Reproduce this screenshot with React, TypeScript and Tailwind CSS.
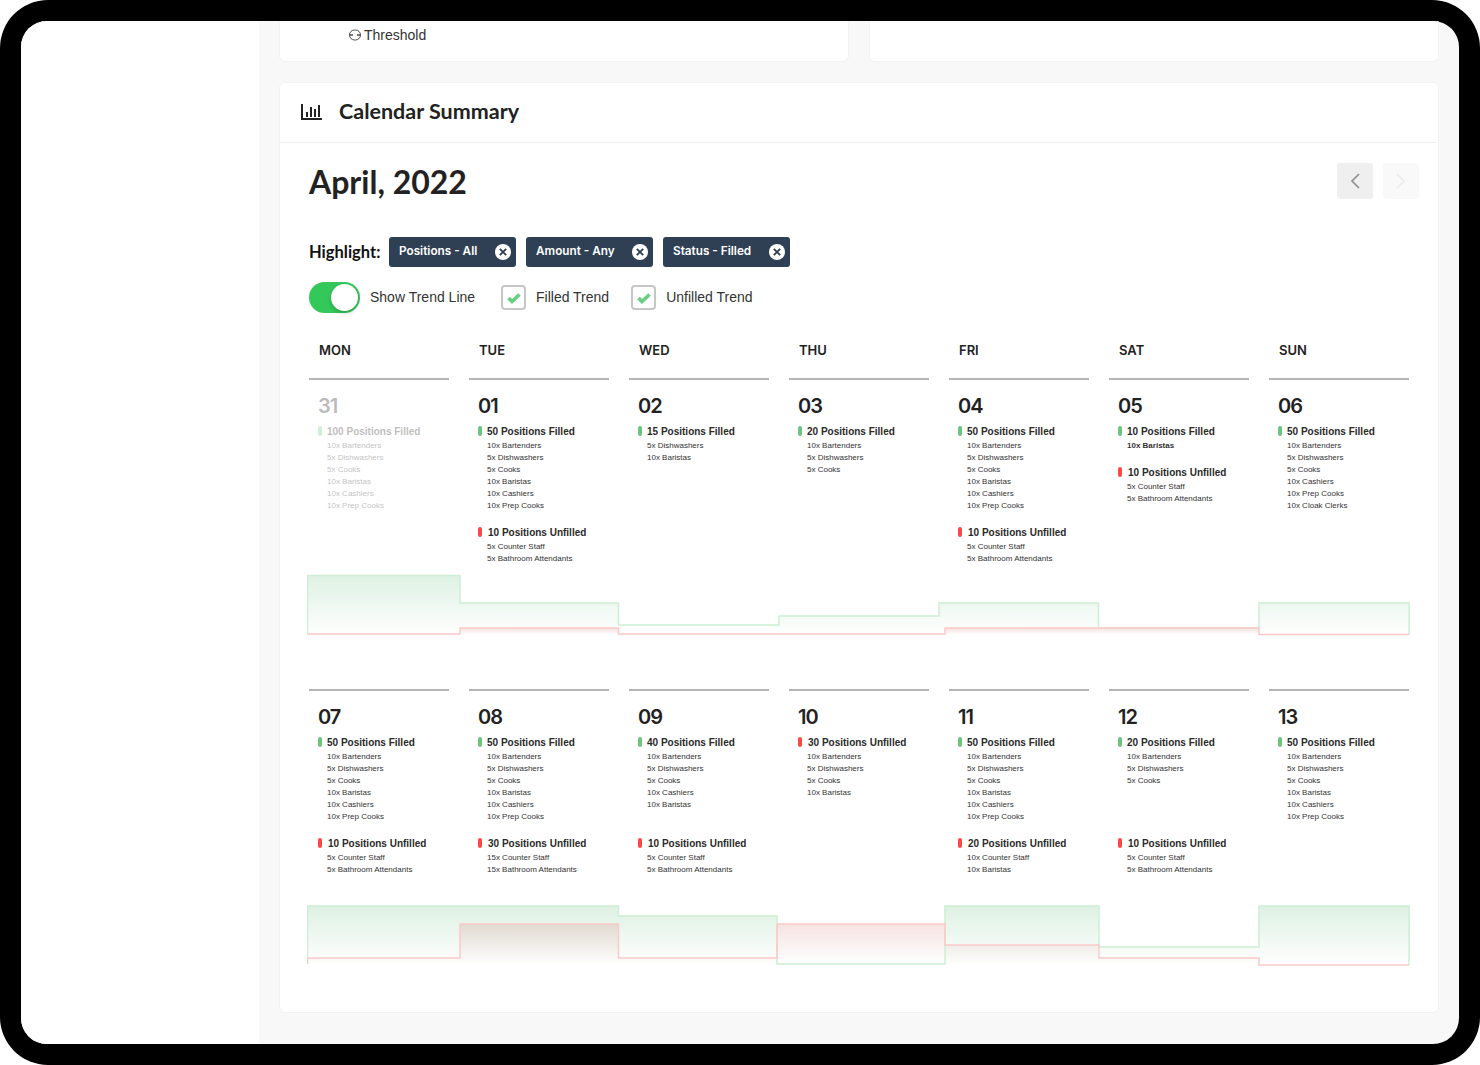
const filledStops = "M307.5 635 V575.5 H460 V603 H618.5 V625 H779 V616 H939 V603 H1098.5 V628 H1259 V603 H1409 V635";

type Section = { kind: "filled" | "unfilled"; title: string; items: string[]; strong?: boolean };
type Day = { num: string; muted?: boolean; sections: Section[] };

const full = ["10x Bartenders", "5x Dishwashers", "5x Cooks", "10x Baristas", "10x Cashiers", "10x Prep Cooks"];
const counterBath = ["5x Counter Staff", "5x Bathroom Attendants"];

const f = (title: string, items: string[], strong?: boolean): Section => ({ kind: "filled", title, items, strong });
const u = (title: string, items: string[]): Section => ({ kind: "unfilled", title, items });

const weekOne: Day[] = [
  { num: "31", muted: true, sections: [f("100 Positions Filled", full)] },
  { num: "01", sections: [f("50 Positions Filled", full), u("10 Positions Unfilled", counterBath)] },
  { num: "02", sections: [f("15 Positions Filled", ["5x Dishwashers", "10x Baristas"])] },
  { num: "03", sections: [f("20 Positions Filled", ["10x Bartenders", "5x Dishwashers", "5x Cooks"])] },
  { num: "04", sections: [f("50 Positions Filled", full), u("10 Positions Unfilled", counterBath)] },
  { num: "05", sections: [f("10 Positions Filled", ["10x Baristas"], true), u("10 Positions Unfilled", counterBath)] },
  {
    num: "06",
    sections: [
      f("50 Positions Filled", ["10x Bartenders", "5x Dishwashers", "5x Cooks", "10x Cashiers", "10x Prep Cooks", "10x Cloak Clerks"]),
    ],
  },
];

// empty strings keep the unfilled block lined up across the second week
const weekTwo: Day[] = [
  { num: "07", sections: [f("50 Positions Filled", full), u("10 Positions Unfilled", counterBath)] },
  { num: "08", sections: [f("50 Positions Filled", full), u("30 Positions Unfilled", ["15x Counter Staff", "15x Bathroom Attendants"])] },
  {
    num: "09",
    sections: [
      f("40 Positions Filled", ["10x Bartenders", "5x Dishwashers", "5x Cooks", "10x Cashiers", "10x Baristas", ""]),
      u("10 Positions Unfilled", counterBath),
    ],
  },
  { num: "10", sections: [u("30 Positions Unfilled", ["10x Bartenders", "5x Dishwashers", "5x Cooks", "10x Baristas"])] },
  { num: "11", sections: [f("50 Positions Filled", full), u("20 Positions Unfilled", ["10x Counter Staff", "10x Baristas"])] },
  {
    num: "12",
    sections: [f("20 Positions Filled", ["10x Bartenders", "5x Dishwashers", "5x Cooks", "", "", ""]), u("10 Positions Unfilled", counterBath)],
  },
  { num: "13", sections: [f("50 Positions Filled", full)] },
];

function DayCell({ day }: { day: Day }) {
  return (
    <div className="border-t-2 border-[#b5b5b5] pl-[9px] pt-[14px]">
      <div className={day.muted ? "opacity-30" : ""}>
        <div className="font-['Inter',sans-serif] text-[20px] font-semibold leading-[24px] tracking-[-1px] text-[#222222]">{day.num}</div>
        <div className="mt-[6px] flex flex-col gap-[13px]">
          {day.sections.map((s) => (
            <div key={s.title}>
              <div className={`flex h-[14px] items-center ${s.kind === "filled" ? "gap-[5px]" : "gap-[6px]"}`}>
                <span className={`h-[10px] w-[4px] rounded-full ${s.kind === "filled" ? "bg-[#6cc47e]" : "bg-[#ff4747]"}`} />
                <span className="font-['Liberation_Sans',sans-serif] text-[10px] font-bold text-[#2a2a2a]">{s.title}</span>
              </div>
              <ul className="mt-[2px] pl-[9px]">
                {s.items.map((item, i) => (
                  <li
                    key={i}
                    className={`h-[12px] font-['Liberation_Sans',sans-serif] text-[8px] leading-[12px] text-[#333333] ${s.strong ? "font-bold" : ""}`}
                  >
                    {item}
                  </li>
                ))}
              </ul>
            </div>
          ))}
        </div>
      </div>
    </div>
  );
}

function TrendChart({ id, top, green, red }: { id: string; top: number; green: string; red: string }) {
  return (
    <svg className="ml-[-2px] block h-[64px] w-[1104px]" viewBox={`307 ${top} 1104 64`}>
      <defs>
        <linearGradient id={`${id}-g`} x1="0" y1="0" x2="0" y2="1">
          <stop offset="0" stopColor="#2fa84f" stopOpacity="0.16" />
          <stop offset="1" stopColor="#2fa84f" stopOpacity="0" />
        </linearGradient>
        <linearGradient id={`${id}-r`} x1="0" y1="0" x2="0" y2="1">
          <stop offset="0" stopColor="#b82525" stopOpacity="0.13" />
          <stop offset="1" stopColor="#b82525" stopOpacity="0" />
        </linearGradient>
      </defs>
      <path d={`${green} Z`} fill={`url(#${id}-g)`} />
      <path d={`${red} Z`} fill={`url(#${id}-r)`} />
      <path d={green} fill="none" stroke="#cdeed4" strokeWidth="1.5" />
      <path d={red} fill="none" stroke="#fcc9c7" strokeWidth="1.5" />
    </svg>
  );
}

function Chip({ label }: { label: string }) {
  return (
    <div className="flex h-[30px] w-[127px] items-center justify-between rounded-[3px] bg-[#2f4054] pl-[10px] pr-[5px]">
      <span className="font-['Inter',sans-serif] text-[11.75px] font-semibold text-white">{label}</span>
      <svg width="16" height="16" viewBox="0 0 16 16">
        <circle cx="8" cy="8" r="8" fill="white" />
        <path d="M4.8 4.8l6.4 6.4M11.2 4.8l-6.4 6.4" stroke="#2f4054" strokeWidth="1.9" />
      </svg>
    </div>
  );
}

function Check({ label }: { label: string }) {
  return (
    <div className="flex items-center gap-[10px]">
      <span className="flex h-[25px] w-[25px] items-center justify-center rounded-[4px] border-2 border-[#c6c6c6]">
        <svg width="14" height="12" viewBox="0 0 14 12">
          <path d="M1.5 6L5 9.5l7.5-7" fill="none" stroke="#66cf80" strokeWidth="3.6" />
        </svg>
      </span>
      <span className="font-['Liberation_Sans',sans-serif] text-[14px] text-[#333333]">{label}</span>
    </div>
  );
}

export default function App() {
  return (
    <div className="h-[1065px] w-[1480px] bg-white">
      <div className="h-full rounded-[48px] bg-black p-[21px]">
        <div className="flex h-full overflow-hidden rounded-[26px] bg-[#f8f8f8]">
          <aside className="w-[238px] shrink-0 bg-white" />
          <main className="min-w-0 flex-1 px-[20px]">
            <div className="grid h-[41px] grid-cols-2 gap-[20px]">
              <div className="flex items-start rounded-b-[6px] border border-t-0 border-[#f2f2f2] bg-white pl-[69px] pt-[5px]">
                <div className="flex items-center gap-[3px] font-['Liberation_Sans',sans-serif] text-[14px] leading-[18px] text-[#333333]">
                  <svg width="12" height="12" viewBox="0 0 12 12" fill="none" stroke="#4a4a4a">
                    <rect x="0.5" y="1" width="11" height="10" rx="5" strokeWidth="1" />
                    <path d="M1 6H4M8 6h3" strokeWidth="1.5" />
                  </svg>
                  Threshold
                </div>
              </div>
              <div className="rounded-b-[6px] border border-t-0 border-[#f2f2f2] bg-white" />
            </div>

            <section className="mt-[20px] h-[931px] rounded-[6px] border border-[#f2f2f2] bg-white">
              <header className="flex h-[60px] items-center gap-[17px] border-b border-[#efefef] pb-[2px] pl-[21px]">
                <svg width="21" height="16" viewBox="0 0 21 16" fill="none" stroke="#222222" strokeWidth="2">
                  <path d="M1 0V15H21" />
                  <path d="M6 8V13M10 3V13M14 5V13M18 1V13" />
                </svg>
                <h2 className="font-['Lato',sans-serif] text-[21.5px] font-bold text-[#222222]">Calendar Summary</h2>
              </header>

              <div className="px-[29px]">
                <div className="flex h-[94px] items-start justify-between">
                  <h1 className="pt-[19px] font-['Lato',sans-serif] text-[32px] font-bold leading-[40px] text-[#222222]">April, 2022</h1>
                  <div className="mr-[-10px] mt-[20px] flex gap-[10px]">
                    <button className="flex h-[36px] w-[36px] items-center justify-center rounded-[3px] bg-[#efefef]">
                      <svg width="10" height="16" viewBox="0 0 10 16" fill="none" stroke="#8f8f8f" strokeWidth="1.7">
                        <path d="M9 1L2 8l7 7" />
                      </svg>
                    </button>
                    <button className="flex h-[36px] w-[36px] items-center justify-center rounded-[3px] bg-[#f9f9f9]">
                      <svg width="10" height="16" viewBox="0 0 10 16" fill="none" stroke="#ececec" strokeWidth="1.7">
                        <path d="M1 1l7 7-7 7" />
                      </svg>
                    </button>
                  </div>
                </div>

                <div className="flex items-center">
                  <span className="w-[80px] shrink-0 font-['Lato',sans-serif] text-[16.5px] font-bold leading-[24px] text-[#111111]">Highlight:</span>
                  <div className="flex gap-[10px]">
                    <Chip label="Positions - All" />
                    <Chip label="Amount - Any" />
                    <Chip label="Status - Filled" />
                  </div>
                </div>

                <div className="mt-[15px] flex items-center">
                  <div className="flex h-[31px] w-[51px] items-center justify-end rounded-full bg-[#34c759] pr-[2px]">
                    <span className="h-[27px] w-[27px] rounded-full bg-white shadow-[0_2px_4px_rgba(0,0,0,0.2)]" />
                  </div>
                  <span className="ml-[10px] w-[105px] whitespace-nowrap font-['Liberation_Sans',sans-serif] text-[14px] text-[#333333]">
                    Show Trend Line
                  </span>
                  <div className="ml-[26px] flex items-center gap-[22px]">
                    <Check label="Filled Trend" />
                    <Check label="Unfilled Trend" />
                  </div>
                </div>

                <div className="mt-[25px] grid w-[1100px] grid-cols-7 gap-x-[20px]">
                  {["MON", "TUE", "WED", "THU", "FRI", "SAT", "SUN"].map((d) => (
                    <div key={d} className="h-[40px] pl-[10px] font-['Inter',sans-serif] text-[13px] font-semibold leading-[24px] text-[#222222]">
                      {d}
                    </div>
                  ))}
                </div>

                <div className="grid h-[196px] w-[1100px] grid-cols-7 gap-x-[20px]">
                  {weekOne.map((d) => (
                    <DayCell key={d.num} day={d} />
                  ))}
                </div>
                <TrendChart
                  id="wk1"
                  top={574}
                  green={filledStops}
                  red="M307.5 634 H460 V628 H618.5 V634 H945 V628 H1259 V634.5 H1409"
                />

                <div className="mt-[51px] grid h-[216px] w-[1100px] grid-cols-7 gap-x-[20px]">
                  {weekTwo.map((d) => (
                    <DayCell key={d.num} day={d} />
                  ))}
                </div>
                <TrendChart
                  id="wk2"
                  top={905}
                  green="M307.5 964 V906 H618.5 V916 H777 V964 H945 V906 H1099 V947 H1259 V906 H1409 V965"
                  red="M307.5 964 V958 H460 V924 H618.5 V958 H777 V924 H945 V945 H1099 V958 H1259 V965 H1409"
                />
              </div>
            </section>
          </main>
        </div>
      </div>
    </div>
  );
}
